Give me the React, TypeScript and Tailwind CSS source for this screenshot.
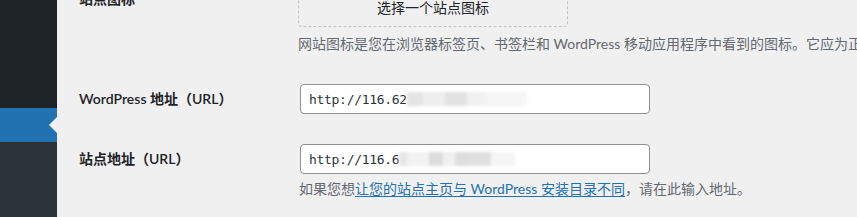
import React from "react";

const cjk = "font-['Lato','Noto_Sans_CJK_SC',sans-serif]";

function Blur({ widths }: { widths: { w: number; c: string }[] }) {
  return (
    <span className="inline-flex h-[14px] items-center blur-[1.5px]">
      {widths.map((b, i) => (
        <span key={i} className="inline-block h-[14px]" style={{ width: b.w, background: b.c }} />
      ))}
    </span>
  );
}

function UrlInput({ value, blur }: { value: string; blur: { w: number; c: string }[] }) {
  return (
    <div className="flex h-[30px] w-[350px] items-center rounded-[4px] border border-[#8c8f94] bg-white pl-[8px]">
      <span className="font-['DejaVu_Sans_Mono',monospace] text-[13px] leading-none tracking-[-0.3px] text-[#2c3338]">{value}</span>
      <Blur widths={blur} />
    </div>
  );
}

export default function App() {
  return (
    <div className={`flex h-[217px] w-[857px] overflow-hidden bg-[#f0f0f1] ${cjk} text-[14px]`}>
      <aside className="flex w-[57px] shrink-0 flex-col">
        <div className="h-[108px] bg-[#1d2327]" />
        <div className="relative h-[34px] bg-[#2271b1]">
          <span className="absolute right-0 top-[9px] h-0 w-0 border-y-[8px] border-r-[8px] border-y-transparent border-r-[#f0f0f1]" />
        </div>
        <div className="flex-1 bg-[#2c3338]" />
      </aside>

      <main className="flex flex-1 flex-col pl-[22px]">
        {/* 站点图标 */}
        <div className="-mt-[45px] flex">
          <div className="w-[220px] shrink-0 pt-[34px] font-semibold leading-[20px] text-[#1d2327]">站点图标</div>
          <div className="-ml-px flex flex-col">
            <div className="flex h-[72px] w-[270px] items-end justify-center rounded-[4px] border border-dashed border-[#c3c4c7] pb-[8px] leading-[20px] text-[#1d2327]">
              选择一个站点图标
            </div>
            <p className="mt-[7px] whitespace-nowrap leading-[20px] text-[#646970]">
              网站图标是您在浏览器标签页、书签栏和 WordPress 移动应用程序中看到的图标。它应为正方形，且至少为 512×512 像素。
            </p>
          </div>
        </div>

        {/* WordPress 地址 */}
        <div className="mt-[30px] flex">
          <div className="w-[221px] shrink-0 pt-[5px] font-semibold leading-[20px] text-[#1d2327]">WordPress 地址（URL）</div>
          <UrlInput
            value="http://116.62"
            blur={[
              { w: 16, c: "#e4e4e4" },
              { w: 22, c: "#eeeeee" },
              { w: 22, c: "#e2e2e2" },
              { w: 20, c: "#f1f1f1" },
              { w: 40, c: "#f6f6f6" },
            ]}
          />
        </div>

        {/* 站点地址 */}
        <div className="mt-[30px] flex">
          <div className="w-[221px] shrink-0 pt-[5px] font-semibold leading-[20px] text-[#1d2327]">站点地址（URL）</div>
          <div className="flex flex-col">
            <UrlInput
              value="http://116.6"
              blur={[
                { w: 8, c: "#e6e6e6" },
                { w: 22, c: "#f2f2f2" },
                { w: 14, c: "#dcdcdc" },
                { w: 12, c: "#f0f0f0" },
                { w: 14, c: "#dedede" },
                { w: 22, c: "#e0e0e0" },
                { w: 24, c: "#f5f5f5" },
              ]}
            />
            <p className="-ml-px mt-[5px] whitespace-nowrap leading-[20px] text-[#646970]">
              如果您想
              <a className="text-[#2271b1] underline underline-offset-2">让您的站点主页与 WordPress 安装目录不同</a>
              ，请在此输入地址。
            </p>
          </div>
        </div>
      </main>
    </div>
  );
}
